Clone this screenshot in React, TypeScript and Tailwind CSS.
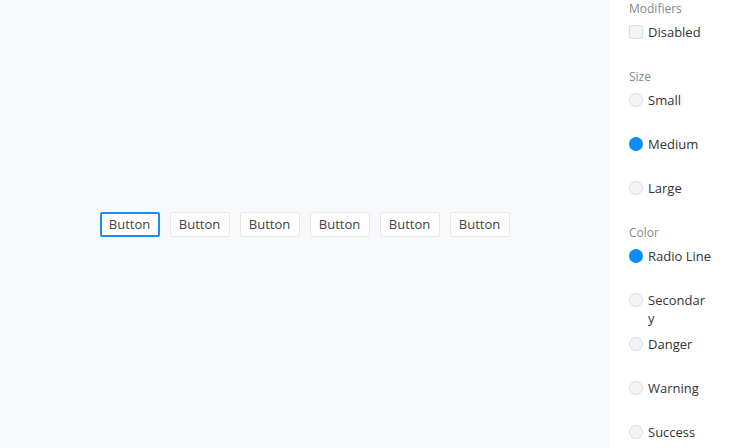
import React from "react";

const Radio = ({ checked, children }: { checked?: boolean; children: React.ReactNode }) => (
  <div className="h-[44px] flex items-start gap-[5px]">
    {checked ? (
      <span className="w-[14px] h-[14px] rounded-full bg-[#0a8cff] shrink-0" />
    ) : (
      <span className="w-[14px] h-[14px] rounded-full bg-[#f2f3f7] border border-[#dcdee6] shrink-0" />
    )}
    <span className="-mt-[2px] text-[13px] leading-[18px] text-[#333]">{children}</span>
  </div>
);

const Label = ({ children }: { children: React.ReactNode }) => (
  <div className="text-[12px] leading-[16px] text-[#888] mb-[8px]">{children}</div>
);

export default function App() {
  return (
    <div className="w-[740px] h-[448px] flex overflow-hidden" style={{ fontFamily: "'Open Sans', 'Noto Sans', sans-serif" }}>
      <div className="flex-1 bg-[#f8f9fb] flex items-center justify-center gap-[10px] pt-[1px]">
        {[0, 1, 2, 3, 4, 5].map((i) => (
          <button
            key={i}
            className={
              i === 0
                ? "w-[60px] h-[25px] bg-white border-2 border-[#1a8cff] rounded-[2px] text-[13px] text-[#444] flex items-center justify-center"
                : "w-[60px] h-[25px] bg-white border border-[#e6e8ed] rounded-[2px] text-[13px] text-[#444] flex items-center justify-center"
            }
          >
            Button
          </button>
        ))}
      </div>
      <div className="w-[131px] bg-white pl-[20px] pt-[1px]">
        <Label>Modifiers</Label>
        <div className="h-[44px] flex items-start gap-[5px]">
          <span className="w-[14px] h-[14px] rounded-[2px] bg-[#f2f3f7] border border-[#dcdee6] shrink-0" />
          <span className="-mt-[2px] text-[13px] leading-[18px] text-[#333]">Disabled</span>
        </div>
        <Label>Size</Label>
        <Radio>Small</Radio>
        <Radio checked>Medium</Radio>
        <Radio>Large</Radio>
        <Label>Color</Label>
        <Radio checked>Radio Line</Radio>
        <Radio>
          Secondar
          <br />y
        </Radio>
        <Radio>Danger</Radio>
        <Radio>Warning</Radio>
        <Radio>Success</Radio>
      </div>
    </div>
  );
}
